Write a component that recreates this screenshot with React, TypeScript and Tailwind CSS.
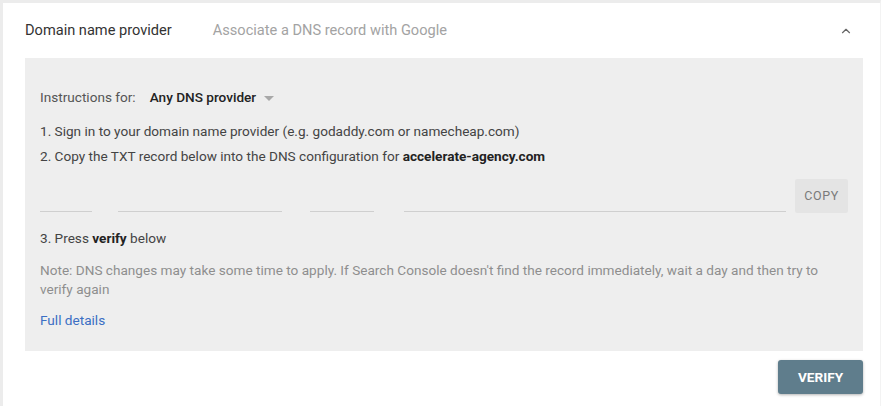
import { ChevronUp } from 'lucide-react';

export default function App() {
  return (
    <div
      className="w-[886px] h-[406px] bg-white overflow-hidden text-[#212121]"
      style={{ fontFamily: 'Roboto, "Liberation Sans", sans-serif' }}
    >
      <div className="h-full border-l-[3px] border-t-[3px] border-[#ececec] border-r border-r-[#f3f3f3] mr-[5px]">
        <div className="flex items-center h-[55px] pl-[22px] pr-[27px] text-[14.6px]">
          <span className="text-[#333]">Domain name provider</span>
          <span className="ml-[41px] text-[#a3a3a3]">Associate a DNS record with Google</span>
          <ChevronUp className="ml-auto w-[14px] h-[14px] text-[#666]" strokeWidth={2} />
        </div>

        <div className="ml-[22px] mr-[17px] bg-[#eeeeee] pl-[15px] pr-[15px] pt-[29px] h-[293px] text-[13.6px]">
          <div className="flex items-center text-[#555]">
            <span>Instructions for:</span>
            <span className="ml-[14px] font-medium text-[#222]">Any DNS provider</span>
            <svg className="ml-[8px] mt-[2px]" width="10" height="5" viewBox="0 0 10 5">
              <path d="M0 0 L10 0 L5 5 Z" fill="#a8a8a8" />
            </svg>
          </div>

          <div className="mt-[12px] text-[#444] leading-[25px]">
            <p>1. Sign in to your domain name provider (e.g. godaddy.com or namecheap.com)</p>
            <p>
              2. Copy the TXT record below into the DNS configuration for{' '}
              <span className="font-bold text-[#222]">accelerate-agency.com</span>
            </p>
          </div>

          <div className="flex items-end mt-[10px] h-[34px]">
            <div className="flex flex-1 items-end h-full pb-[1px]">
              <div className="w-[52px] border-b border-[#cfcfcf]" />
              <div className="ml-[26px] w-[164px] border-b border-[#cfcfcf]" />
              <div className="ml-[28px] w-[64px] border-b border-[#cfcfcf]" />
              <div className="ml-[30px] w-[382px] border-b border-[#cfcfcf]" />
            </div>
            <button className="ml-[9px] w-[54px] h-[34px] bg-[#e4e4e4] rounded-[2px] text-[12.5px] tracking-[0.6px] text-[#7a7a7a]">
              COPY
            </button>
          </div>

          <p className="mt-[15px] text-[#444]">
            3. Press <span className="font-bold text-[#222]">verify</span> below
          </p>

          <p className="mt-[12px] text-[#8e8e8e] leading-[19px] pr-[8px]">
            Note: DNS changes may take some time to apply. If Search Console doesn't find the record immediately, wait a day and then try to verify again
          </p>

          <p className="mt-[11px] text-[#3b6fc4]">Full details</p>
        </div>

        <div className="flex justify-end mr-[17px] mt-[9px]">
          <button className="w-[85px] h-[34px] bg-[#5f7d8c] rounded-[3px] text-white text-[13.6px] font-bold shadow-[0_1px_3px_rgba(0,0,0,0.3)]">
            VERIFY
          </button>
        </div>
      </div>
    </div>
  );
}
